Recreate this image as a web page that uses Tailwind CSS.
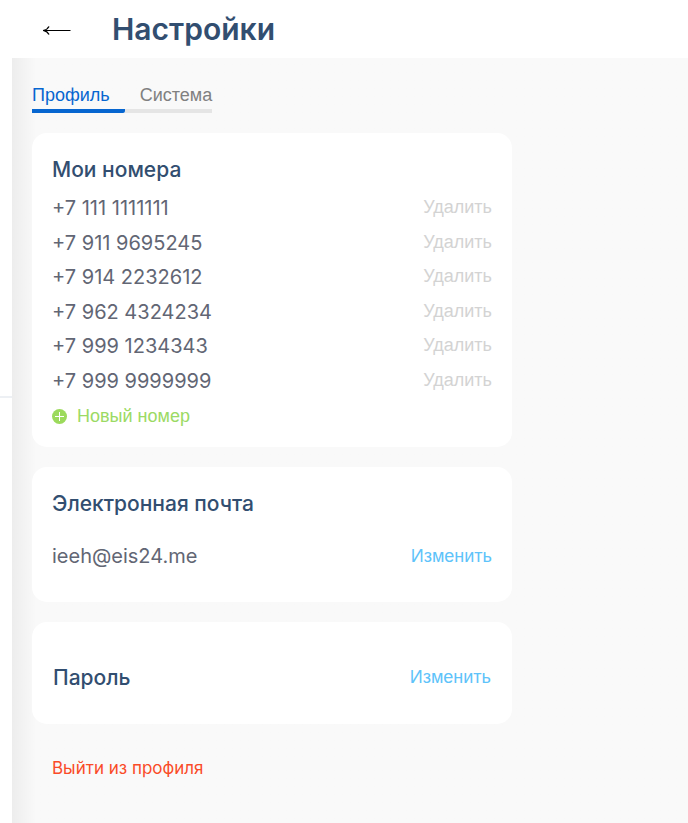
<!DOCTYPE html>
<html lang="ru">
<head>
<meta charset="utf-8">
<meta name="viewport" content="width=device-width, initial-scale=1">
<title>Настройки</title>
<script src="https://cdn.jsdelivr.net/npm/@tailwindcss/browser@4"></script>
</head>
<body class="flex min-h-screen bg-white font-['Inter','Liberation_Sans',sans-serif] text-[#626674]">
  <aside class="w-3 shrink-0"><div class="mt-[396px] h-0.5 bg-[#edf0f4]"></div></aside>
  <div class="flex min-w-0 flex-1 flex-col">
    <header class="flex h-[58px] items-center gap-10 pl-[30px]">
      <button type="button" aria-label="Назад" class="flex w-[30px] justify-center">
        <svg class="h-3 w-7 shrink-0" viewBox="0 0 28 12" fill="none" stroke="#000"><path d="M27.5 7.5H2"/><path d="M6 3.5Q4.5 6.5 1 7.5Q4.5 8.5 6 11.5" stroke-width="1.4"/></svg>
      </button>
      <h1 class="text-[30px] leading-9 font-semibold text-[#324e70]">Настройки</h1>
    </header>
    <main class="flex-1 bg-[#f9f9f9] bg-linear-to-r from-[#ededed] to-[#f9f9f9] to-[24px] px-5 pt-[25px] pb-5">
      <nav class="flex font-['Liberation_Sans',sans-serif] text-[18px] leading-6">
        <a href="#profile" class="rounded-r-xs border-b-4 border-[#0766d0] pr-[15px] pb-0.5 text-[#0766d0]">Профиль</a>
        <a href="#system" class="border-b-4 border-[#e5e5e5] pb-0.5 pl-[15px] text-[#808080]">Система</a>
      </nav>
      <div class="mt-5 flex max-w-[480px] flex-col gap-5">
        <section class="rounded-[15px] bg-white px-5 pt-[25px] pb-[19px]">
          <h2 class="text-[21px] leading-6 font-medium text-[#324e70]">Мои номера</h2>
          <ul class="mt-[9px] grid h-[207px] auto-rows-fr text-[20px]">
            <li class="flex items-center justify-between"><span>+7 111 1111111</span><button type="button" class="pb-px font-['Liberation_Sans',sans-serif] text-[18px] text-[#d3d3d3]">Удалить</button></li>
            <li class="flex items-center justify-between"><span>+7 911 9695245</span><button type="button" class="pb-px font-['Liberation_Sans',sans-serif] text-[18px] text-[#d3d3d3]">Удалить</button></li>
            <li class="flex items-center justify-between"><span>+7 914 2232612</span><button type="button" class="pb-px font-['Liberation_Sans',sans-serif] text-[18px] text-[#d3d3d3]">Удалить</button></li>
            <li class="flex items-center justify-between"><span>+7 962 4324234</span><button type="button" class="pb-px font-['Liberation_Sans',sans-serif] text-[18px] text-[#d3d3d3]">Удалить</button></li>
            <li class="flex items-center justify-between"><span>+7 999 1234343</span><button type="button" class="pb-px font-['Liberation_Sans',sans-serif] text-[18px] text-[#d3d3d3]">Удалить</button></li>
            <li class="flex items-center justify-between"><span>+7 999 9999999</span><button type="button" class="pb-px font-['Liberation_Sans',sans-serif] text-[18px] text-[#d3d3d3]">Удалить</button></li>
          </ul>
          <button type="button" class="mt-1.5 flex items-center gap-[10px] font-['Liberation_Sans',sans-serif] text-[18px] leading-6 text-[#9bda64]">
            <svg class="size-[15px]" viewBox="0 0 15 15"><circle cx="7.5" cy="7.5" r="7.5" fill="#9cda5c"/><path d="M7.5 3v9M3 7.5h9" stroke="#fff" stroke-width="1"/></svg>
            Новый номер
          </button>
        </section>
        <section class="rounded-[15px] bg-white px-5 pt-[25px] pb-[34px]">
          <h2 class="text-[21px] leading-6 font-medium text-[#324e70]">Электронная почта</h2>
          <div class="mt-7 flex h-6 items-center justify-between leading-6">
            <span class="text-[20px]">ieeh@eis24.me</span>
            <button type="button" class="pb-px font-['Liberation_Sans',sans-serif] text-[18px] text-[#5ec3fa]">Изменить</button>
          </div>
        </section>
        <section class="flex items-center justify-between rounded-[15px] bg-white px-[21px] pt-[43px] pb-[34px] leading-6">
          <h2 class="text-[21px] font-medium text-[#324e70]">Пароль</h2>
          <button type="button" class="pb-px font-['Liberation_Sans',sans-serif] text-[18px] text-[#5ec3fa]">Изменить</button>
        </section>
      </div>
      <button type="button" class="mt-8 ml-5 text-[17px] leading-6 text-[#fa4b28]">Выйти из профиля</button>
    </main>
  </div>
</body>
</html>
